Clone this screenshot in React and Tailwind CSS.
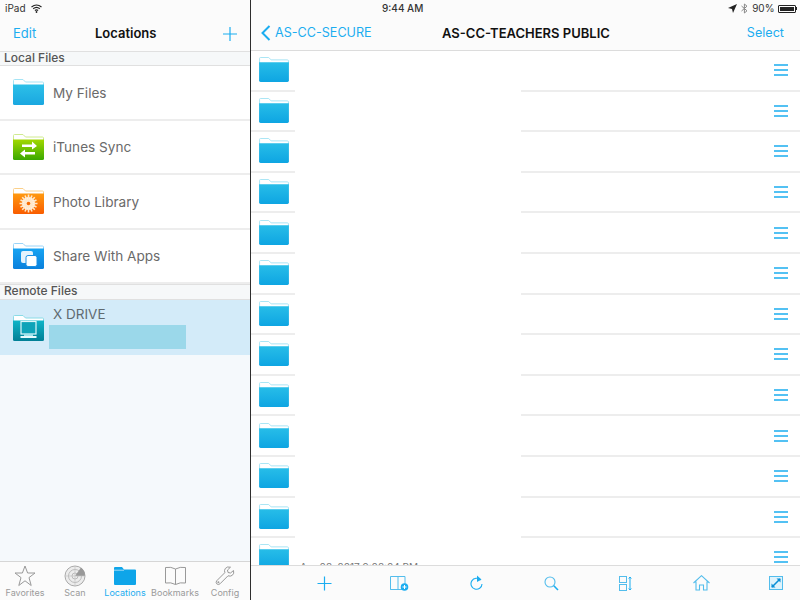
import React from "react";

const BLUE = "#1badf0";

function Folder({ id, top, bottom, edge, w = 31, h = 26, children }) {
  return (
    <svg width={w} height={h} viewBox="0 0 31 26" className="shrink-0 block">
      <defs>
        <linearGradient id={id} x1="0" y1="0" x2="0" y2="1">
          <stop offset="0" stopColor={top} />
          <stop offset="1" stopColor={bottom} />
        </linearGradient>
      </defs>
      <path d="M1.5 0.5H10L12.5 3H29.5Q30.5 3 30.5 4V8H0.5V1.5Q0.5 0.5 1.5 0.5Z" fill="#fff" stroke={edge} strokeWidth="1" />
      <path d="M0 5.5H31V24.5Q31 26 29.5 26H1.5Q0 26 0 24.5Z" fill={`url(#${id})`} />
      {children}
    </svg>
  );
}

function Row({ icon, label }) {
  return (
    <div className="h-[54.6px] border-b-2 border-[#ededed] flex items-center pl-[13px] shrink-0 bg-white">
      <div className="w-[40px]">{icon}</div>
      <span className="text-[13.6px] text-[#6a6a6a] pt-[1px]">{label}</span>
    </div>
  );
}

function SectionHead({ label, className }) {
  return (
    <div className={`flex items-center pl-[4px] pb-[2px] bg-[#f6f8f9] border-y border-[#e0e0e0] text-[12px] leading-[12px] font-medium text-[#555] ${className}`}>
      {label}
    </div>
  );
}

function Tab({ label, active, children }) {
  return (
    <div className="flex-1 flex flex-col items-center">
      <div className="h-[22px] flex items-center justify-center">{children}</div>
      <span className={`text-[9px] leading-[12px] ${active ? "text-[#1badf0]" : "text-[#9a9a9a]"}`}>{label}</span>
    </div>
  );
}

function Hamburger() {
  return (
    <svg width="14" height="12" viewBox="0 0 14 12" className="block">
      <path d="M0 1H14M0 6H14M0 11H14" stroke={BLUE} strokeWidth="1.5" />
    </svg>
  );
}

function FileRow({ i }) {
  return (
    <div className="h-[40.6px] shrink-0 flex flex-col">
      <div className="flex-1 min-h-0 flex items-center pl-[8px] pr-[12px] pb-[1px]">
        <Folder id={`f${i}`} top="#27bde8" bottom="#0ea5e2" edge="#a5e4f5" w={30} h={25} />
        <div className="flex-1" />
        <div className="pt-[1px]"><Hamburger /></div>
      </div>
      <div className="flex h-[2px] shrink-0">
        <div className="w-[44px] bg-[#ededed]" />
        <div className="w-[226px]" />
        <div className="flex-1 bg-[#ededed]" />
      </div>
    </div>
  );
}

function ToolCell({ children }) {
  return <div className="w-[75.3px] shrink-0 flex items-center justify-center">{children}</div>;
}

export default function App() {
  const rows = Array.from({ length: 13 });
  return (
    <div className="w-[800px] h-[600px] overflow-hidden flex bg-white text-black font-['Inter','Liberation_Sans',sans-serif]">
      {/* Left column */}
      <div className="w-[250px] h-full flex flex-col bg-[#f5f9fc] shrink-0">
        <div className="h-[51px] shrink-0 bg-[#fbfbfb] flex flex-col">
          <div className="h-[16px] flex items-center pl-[5px] gap-[5px] text-[10px] text-[#333] pt-[1px]">
            <span>iPad</span>
            <svg width="11" height="9" viewBox="0 0 11 9">
              <path d="M0.5 3Q5.5 -1 10.5 3M2.2 4.8Q5.5 2 8.8 4.8M3.9 6.5Q5.5 5.2 7.1 6.5" stroke="#222" strokeWidth="1.2" fill="none" />
              <circle cx="5.5" cy="8" r="0.9" fill="#222" />
            </svg>
          </div>
          <div className="flex-1 flex items-center pl-[13px] pr-[12px] pt-[1px]">
            <span className="text-[13px] text-[#1badf0] w-[82px]">Edit</span>
            <span className="text-[13px] font-semibold text-[#111]">Locations</span>
            <svg width="16" height="16" viewBox="0 0 16 16" className="ml-auto">
              <path d="M8 1V15M1 8H15" stroke={BLUE} strokeWidth="1.2" />
            </svg>
          </div>
        </div>
        <SectionHead label="Local Files" className="h-[15px] shrink-0" />
        <Row label="My Files" icon={
          <Folder id="my" top="#2dc0e8" bottom="#1aa7e0" edge="#a5e4f5" />
        } />
        <Row label="iTunes Sync" icon={
          <Folder id="itunes" top="#a2d800" bottom="#3aa800" edge="#d0ea90">
            <path d="M9 10.5H19V7.5L24 12L19 15.5V13H9Z" fill="#fff" />
            <path d="M22 18H12V15.5L7 19.5L12 23.5V20.5H22Z" fill="#fff" />
          </Folder>
        } />
        <Row label="Photo Library" icon={
          <Folder id="photo" top="#ff9a10" bottom="#f95c00" edge="#fbd08a">
            <circle cx="15.5" cy="15.5" r="6.5" fill="#fff" opacity="0.95" />
            <path d="M15.5 6.5V24.5M6.5 15.5H24.5M9.2 9.2L21.8 21.8M21.8 9.2L9.2 21.8M12 7.5L19 23.5M19 7.5L12 23.5M7.5 12L23.5 19M23.5 12L7.5 19" stroke="#ffe8cc" strokeWidth="1.6" />
            <circle cx="15.5" cy="15.5" r="1.8" fill="#f96a00" />
          </Folder>
        } />
        <Row label="Share With Apps" icon={
          <Folder id="share" top="#18a4f2" bottom="#0a80dc" edge="#9ad4f8">
            <rect x="8" y="8" width="12" height="12" rx="2" fill="#e4f3fd" />
            <rect x="13" y="12.5" width="11" height="11" rx="2" fill="#fff" stroke="#1a90e6" strokeWidth="1" />
          </Folder>
        } />
        <SectionHead label="Remote Files" className="h-[16px] shrink-0" />
        <div className="h-[55px] shrink-0 bg-[#d3ebf9] flex pl-[13px]">
          <div className="w-[40px] pt-[15px]">
            <Folder id="xdrive" top="#10b4c8" bottom="#007f95" edge="#8adbe6">
              <rect x="8" y="6.5" width="15" height="12.5" fill="#0fa3b8" stroke="#e0f7fa" strokeWidth="1.2" />
              <rect x="7.5" y="21" width="16" height="2" fill="#e8fafc" />
              <rect x="11" y="19" width="9" height="2" fill="#9fe3ec" />
            </Folder>
          </div>
          <div className="flex flex-col ml-[-4px]">
            <span className="text-[13.5px] leading-[18px] mt-[5px] pl-[4px] text-[#5f6a70]">X DRIVE</span>
            <div className="w-[137px] h-[24px] bg-[#9bd8ea] mt-[2px]" />
          </div>
        </div>
        <div className="flex-1" />
        <div className="h-[39px] shrink-0 bg-[#fbfbfb] border-t border-[#d6d6d6] flex pt-[3px]">
          <Tab label="Favorites">
            <svg width="22" height="22" viewBox="0 0 22 22">
              <path d="M11 1L13.6 8H21L15 12.6L17.2 20.5L11 15.8L4.8 20.5L7 12.6L1 8H8.4Z" fill="none" stroke="#999" strokeWidth="1" />
            </svg>
          </Tab>
          <Tab label="Scan">
            <svg width="22" height="22" viewBox="0 0 22 22">
              <circle cx="11" cy="11" r="10" fill="#ececec" stroke="#aaa" />
              <circle cx="11" cy="11" r="6.5" fill="none" stroke="#bbb" />
              <circle cx="11" cy="11" r="3" fill="none" stroke="#bbb" />
              <path d="M11 11L17 2.5A10 10 0 0 1 21 11Z" fill="#999" />
              <path d="M1 11H21M11 1V21" stroke="#c4c4c4" strokeWidth="0.7" />
            </svg>
          </Tab>
          <Tab label="Locations" active>
            <svg width="22" height="18" viewBox="0 0 22 18">
              <path d="M0 1Q0 0 1 0H8L10 2.5H21Q22 2.5 22 3.5V17Q22 18 21 18H1Q0 18 0 17Z" fill="#0ea5e9" />
              <path d="M0 3.2H10" stroke="#fff" strokeWidth="0.6" />
            </svg>
          </Tab>
          <Tab label="Bookmarks">
            <svg width="23" height="20" viewBox="0 0 23 20">
              <path d="M11.5 3Q7 0.5 1.5 1.5V17Q7 16 11.5 18.5Q16 16 21.5 17V1.5Q16 0.5 11.5 3ZM11.5 3V18.5" fill="none" stroke="#999" strokeWidth="1" />
            </svg>
          </Tab>
          <Tab label="Config">
            <svg width="20" height="20" viewBox="0 0 20 20">
              <path d="M18.5 4.5L15.5 7L13 6.5L12.5 4L15.5 1.2Q12 0.2 10.3 2.5Q9 4.3 9.8 6.7L1.7 14.8Q0.5 16.3 1.7 17.8Q3.4 19.3 5 17.8L13 9.8Q15.5 10.7 17.3 9.3Q19.5 7.6 18.5 4.5Z" fill="none" stroke="#999" strokeWidth="1" />
              <circle cx="3.4" cy="16.2" r="1" fill="#999" />
            </svg>
          </Tab>
        </div>
      </div>

      <div className="w-px h-full bg-[#2e2e2e] shrink-0" />

      {/* Right column */}
      <div className="flex-1 h-full flex flex-col min-w-0">
        <div className="h-[51px] shrink-0 bg-[#fbfbfb] border-b border-[#dcdcdc] flex flex-col">
          <div className="h-[16px] flex items-center text-[10px] text-[#333] pr-[3px] pt-[1px]">
            <span className="font-medium ml-[131px]">9:44 AM</span>
            <div className="flex items-center gap-[4px] ml-auto">
              <svg width="9" height="9" viewBox="0 0 9 9"><path d="M9 0L5 9L4 5L0 4Z" fill="#222" /></svg>
              <svg width="7" height="11" viewBox="0 0 7 11"><path d="M0.5 3L6 7.8L3.4 10V1L6 3.2L0.5 8" fill="none" stroke="#888" strokeWidth="1" /></svg>
              <span>90%</span>
              <div className="flex items-center ml-[-1px]">
                <div className="w-[18px] h-[8px] border border-[#222] rounded-[1px] p-px">
                  <div className="w-[14px] h-full bg-[#222]" />
                </div>
                <div className="w-[1.5px] h-[3px] bg-[#222]" />
              </div>
            </div>
          </div>
          <div className="flex-1 flex items-center pl-[10px] pr-[16px] pt-[1px]">
            <div className="flex items-center gap-[4px] w-[181px] shrink-0">
              <svg width="10" height="16" viewBox="0 0 10 16"><path d="M8.5 1L1.5 8L8.5 15" fill="none" stroke={BLUE} strokeWidth="2" /></svg>
              <span className="text-[12.6px] text-[#1badf0]">AS-CC-SECURE</span>
            </div>
            <span className="text-[13px] font-semibold text-[#111]">AS-CC-TEACHERS PUBLIC</span>
            <span className="text-[12.6px] text-[#1badf0] ml-auto">Select</span>
          </div>
        </div>

        <div className="flex-1 min-h-0 overflow-hidden flex flex-col relative">
          {rows.map((_, i) => <FileRow key={i} i={i} />)}
          <span className="absolute left-[49px] top-[510px] text-[10px] leading-[12px] text-[#777]">Apr 03, 2017 9:08:04 PM</span>
        </div>

        <div className="h-[35px] shrink-0 bg-[#fbfbfb] border-t border-[#dcdcdc] flex items-center pl-[36px]">
          <ToolCell>
            <svg width="15" height="15" viewBox="0 0 15 15"><path d="M7.5 0.5V14.5M0.5 7.5H14.5" stroke={BLUE} strokeWidth="1.2" /></svg>
          </ToolCell>
          <ToolCell>
            <svg width="19" height="15" viewBox="0 0 19 15">
              <path d="M0.5 0.5H15V9M12 13.5H0.5ZM0.5 0.5V13.5M8 0.5V13.5" fill="none" stroke="#53bdec" strokeWidth="1" />
              <circle cx="14.5" cy="11" r="3.8" fill={BLUE} />
              <path d="M12.5 11H16.5M14.5 9V13" stroke="#fff" strokeWidth="1" />
            </svg>
          </ToolCell>
          <ToolCell>
            <svg width="13" height="16" viewBox="0 0 13 16" className="ml-[3px]">
              <path d="M10.5 5A5.5 5.5 0 1 0 12 9" fill="none" stroke={BLUE} strokeWidth="1.1" />
              <path d="M7 0.5L11.5 4.5L7 7Z" fill={BLUE} />
            </svg>
          </ToolCell>
          <ToolCell>
            <svg width="15" height="15" viewBox="0 0 15 15" className="ml-[2px]">
              <circle cx="6" cy="6" r="5" fill="none" stroke="#53bdec" strokeWidth="1.1" />
              <path d="M9.8 9.8L14 14" stroke={BLUE} strokeWidth="1.6" />
            </svg>
          </ToolCell>
          <ToolCell>
            <svg width="13" height="15" viewBox="0 0 13 15">
              <rect x="0.5" y="0.5" width="7" height="6" fill="none" stroke="#53bdec" />
              <rect x="0.5" y="8.5" width="7" height="6" fill="none" stroke="#53bdec" />
              <path d="M11 1V14M9.7 2.5L11 1L12.3 2.5M9.7 12.5L11 14L12.3 12.5" fill="none" stroke={BLUE} strokeWidth="1" />
            </svg>
          </ToolCell>
          <ToolCell>
            <svg width="17" height="16" viewBox="0 0 17 16">
              <path d="M0.5 8L8.5 0.7L16.5 8M3 6.5V15H6.5V10H10.5V15H14V6.5" fill="none" stroke="#53bdec" strokeWidth="1.1" />
            </svg>
          </ToolCell>
          <ToolCell>
            <svg width="14" height="14" viewBox="0 0 14 14" className="mr-[1px]">
              <rect x="0.5" y="0.5" width="13" height="13" fill="#dff3fc" stroke="#53bdec" />
              <path d="M3 11L11 3" stroke="#0b8fd6" strokeWidth="1.6" />
              <path d="M7.5 2.5H11.5V6.5ZM2.5 7.5V11.5H6.5Z" fill="#0b8fd6" />
            </svg>
          </ToolCell>
        </div>
      </div>
    </div>
  );
}
